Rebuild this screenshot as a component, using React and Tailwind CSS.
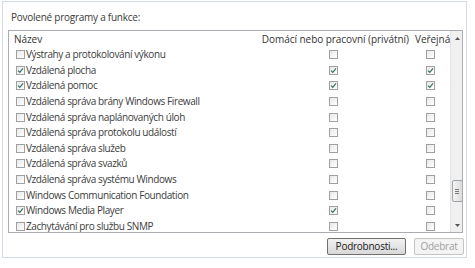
import React from 'react';

const rows = [
    { name: 'Výstrahy a protokolování výkonu', on: false, priv: false, pub: false },
    { name: 'Vzdálená plocha', on: true, priv: true, pub: true },
    { name: 'Vzdálená pomoc', on: true, priv: true, pub: true },
    { name: 'Vzdálená správa brány Windows Firewall', on: false, priv: false, pub: false },
    { name: 'Vzdálená správa naplánovaných úloh', on: false, priv: false, pub: false },
    { name: 'Vzdálená správa protokolu událostí', on: false, priv: false, pub: false },
    { name: 'Vzdálená správa služeb', on: false, priv: false, pub: false },
    { name: 'Vzdálená správa svazků', on: false, priv: false, pub: false },
    { name: 'Vzdálená správa systému Windows', on: false, priv: false, pub: false },
    { name: 'Windows Communication Foundation', on: false, priv: false, pub: false },
    { name: 'Windows Media Player', on: true, priv: true, pub: false },
    { name: 'Zachytávání pro službu SNMP', on: false, priv: false, pub: false },
];

function Check({ checked }) {
    return (
        <span className="inline-flex items-center justify-center w-[9px] h-[9px] border border-[#a0a0a0] bg-gradient-to-br from-[#e8e8e8] to-white shrink-0">
            {checked && (
                <svg viewBox="0 0 7 7" className="w-[7px] h-[7px]">
                    <path d="M1 3.6 L2.8 5.3 L6 1.4" fill="none" stroke="#3a7262" strokeWidth="1.2" />
                </svg>
            )}
        </span>
    );
}

export default function App() {
    return (
        <div className="w-[475px] h-[268px] bg-white pl-[2px] pt-[1px] text-[#3c3c3c] text-[10px] tracking-[-0.25px]" style={{ fontFamily: '"Segoe UI", "Open Sans", sans-serif' }}>
            <div className="w-[465px] h-[257px] border border-[#d4dbe2] bg-white pl-[5px] pr-[2px] flex flex-col">
                {/* Title */}
                <div className="h-[28px] flex items-center pl-[3px] pt-[2px] text-[#3a3a3a]">Povolené programy a funkce:</div>

                {/* List */}
                <div className="w-[455px] h-[203px] border border-[#a9adb2] flex overflow-hidden">
                    <div className="flex-1 flex flex-col">
                        <div className="h-[16px] shrink-0 flex items-center text-[#333] tracking-[-0.05px]">
                            <div className="w-[246px] pl-[5px]">Název</div>
                            <div className="w-[156px] text-right pr-[2px] whitespace-nowrap">Domácí nebo pracovní (privátní)</div>
                            <div className="flex-1 pl-[4px]">Veřejná</div>
                        </div>
                        {rows.map((r) => (
                            <div key={r.name} className="h-[15.6px] shrink-0 flex items-center tracking-[-0.4px]">
                                <div className="w-[246px] pl-[7px] flex items-center gap-[1px]">
                                    <Check checked={r.on} />
                                    <span className="whitespace-nowrap">{r.name}</span>
                                </div>
                                <div className="w-[156px] flex justify-center">
                                    <Check checked={r.priv} />
                                </div>
                                <div className="flex-1 flex justify-center pr-[1px]">
                                    <Check checked={r.pub} />
                                </div>
                            </div>
                        ))}
                    </div>

                    {/* Scrollbar */}
                    <div className="w-[13px] shrink-0 bg-[#f0f0f0] border-l border-[#e3e3e3] flex flex-col items-center">
                        <div className="h-[14px] flex items-center justify-center">
                            <svg viewBox="0 0 5 3" className="w-[5px] h-[3px]"><path d="M0 3 L2.5 0 L5 3 Z" fill="#555" /></svg>
                        </div>
                        <div className="flex-1" />
                        <div className="w-[11px] h-[22px] rounded-[2px] border border-[#9ea3a8] bg-gradient-to-r from-[#f4f4f4] to-[#dcdcdc] flex flex-col items-center justify-center gap-[1px]">
                            <span className="w-[4px] h-px bg-[#7a7a7a]" />
                            <span className="w-[4px] h-px bg-[#7a7a7a]" />
                            <span className="w-[4px] h-px bg-[#7a7a7a]" />
                        </div>
                        <div className="h-[16px]" />
                        <div className="h-[14px] flex items-center justify-center">
                            <svg viewBox="0 0 5 3" className="w-[5px] h-[3px]"><path d="M0 0 L5 0 L2.5 3 Z" fill="#555" /></svg>
                        </div>
                    </div>
                </div>

                {/* Buttons */}
                <div className="flex justify-end gap-[8px] mt-[5px]">
                    <button className="w-[79px] h-[17px] rounded-[2px] border border-[#707070] bg-gradient-to-b from-[#f2f2f2] to-[#d8d8d8] text-[#222] flex items-center justify-center">
                        Podrobnosti...
                    </button>
                    <button className="w-[50px] h-[17px] rounded-[2px] border border-[#c4c4c4] bg-[#f4f4f4] text-[#a0a0a0] flex items-center justify-center">
                        Odebrat
                    </button>
                </div>
            </div>
        </div>
    );
}
